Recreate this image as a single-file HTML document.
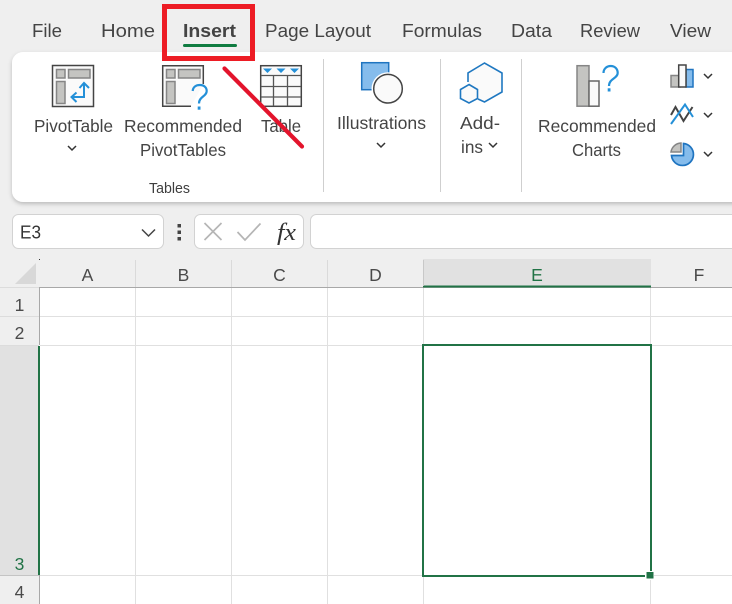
<!DOCTYPE html>
<html><head><meta charset="utf-8"><style>
html,body{margin:0;padding:0;width:732px;height:604px;overflow:hidden;background:#efefef}
svg{display:block;position:absolute;left:0;top:0}
text{font-family:"Liberation Sans",sans-serif;fill:#3f3f3f}
.t{font-size:18.5px;fill:#444}
.l{font-size:17.5px;fill:#444}
.h{font-size:17.5px;fill:#4a4a4a}
</style></head><body>
<svg width="732" height="604" viewBox="0 0 732 604" xmlns="http://www.w3.org/2000/svg">
<defs>
<filter id="s" x="-5%" y="-10%" width="110%" height="125%"><feDropShadow dx="0" dy="2" stdDeviation="2" flood-color="#000" flood-opacity=".22"/></filter>
</defs>
<rect width="732" height="604" fill="#efefef"/>
<!-- Tabs -->
<text class="t" x="32" y="37" textLength="30" lengthAdjust="spacingAndGlyphs">File</text>
<text class="t" x="101" y="37" textLength="54" lengthAdjust="spacingAndGlyphs">Home</text>
<text class="t" x="183" y="37" textLength="53" lengthAdjust="spacingAndGlyphs" style="font-weight:700">Insert</text>
<text class="t" x="265" y="37" textLength="106" lengthAdjust="spacingAndGlyphs">Page Layout</text>
<text class="t" x="402" y="37" textLength="80" lengthAdjust="spacingAndGlyphs">Formulas</text>
<text class="t" x="511" y="37" textLength="41" lengthAdjust="spacingAndGlyphs">Data</text>
<text class="t" x="580" y="37" textLength="60" lengthAdjust="spacingAndGlyphs">Review</text>
<text class="t" x="670" y="37" textLength="41" lengthAdjust="spacingAndGlyphs">View</text>
<rect x="183" y="44" width="54" height="3" rx="1.5" fill="#107c41"/>
<!-- Ribbon -->
<rect x="12" y="52" width="760" height="150" rx="11" fill="#fff" filter="url(#s)"/>
<path d="M323.5 59V192M440.5 59V192M521.5 59V192" stroke="#cfcfcf" fill="none"/>
<!-- PivotTable icon -->
<g>
<rect x="52.5" y="65.5" width="41" height="41" fill="#fafafa" stroke="#444" stroke-width="1.5"/>
<path d="M56.500 69.500h8.500v8.500h-8.500zM68.500 69.500h21.500v8.500h-21.500zM56.500 81.500h8.500v22h-8.500z" fill="#c4c4c1" stroke="#858585" stroke-width="1.500"/>
<path d="M84 83V97H72M79.500 88L84 83L89 88M76.500 92.500L71.500 97L76.500 102" fill="none" stroke="#2490d8" stroke-width="2"/>
</g>
<!-- Recommended PivotTable icon -->
<g>
<path d="M191 106.300H162.700V65.700H203.300V84" fill="#fafafa" stroke="#444" stroke-width="1.500"/>
<path d="M166.500 69.500h8.500v8.500h-8.500zM178.500 69.500h21.500v8.500h-21.500zM166.500 81.500h8.500v22h-8.500z" fill="#c4c4c1" stroke="#858585" stroke-width="1.500"/>
<path d="M192.700 91C193 87 196 85 200 85C204 85 206.700 87.500 206.700 91C206.700 96.500 199 96.500 199 103.500" fill="none" stroke="#2490d8" stroke-width="2.200"/>
<rect x="197.700" y="106.500" width="2.800" height="3.200" fill="#2490d8"/>
</g>
<!-- Table icon -->
<g>
<rect x="260.700" y="65.700" width="40.600" height="40.600" fill="#fafafa" stroke="#444" stroke-width="1.500"/>
<path d="M261 75.500H301M261 86.500H301M261 97H301M273.500 75.500V106M287.500 75.500V106" stroke="#555" stroke-width="1.300" fill="none"/>
<path d="M263 68.500h9l-4.500 4.500zM276.500 68.500h9l-4.500 4.500zM290 68.500h9l-4.500 4.500z" fill="#2490d8"/>
</g>
<!-- Illustrations icon -->
<rect x="361.700" y="62.700" width="27" height="27" fill="#85bcec" stroke="#1f74c0" stroke-width="1.500"/>
<circle cx="388" cy="88.700" r="16.500" fill="#fff"/>
<circle cx="388" cy="88.700" r="14.300" fill="#fafafa" stroke="#444" stroke-width="1.500"/>
<!-- Add-ins icon -->
<path d="M468 82V73L484.500 63L502 73V92L484.500 102L478 99" fill="#fafafa" stroke="#1f78c1" stroke-width="1.600" stroke-linejoin="miter"/>
<path d="M469 84.500L477.500 89.500V98.500L469 103L460.500 98.500V89.500Z" fill="#fafafa" stroke="#1f78c1" stroke-width="1.600"/>
<!-- Recommended Charts icon -->
<rect x="577" y="65.700" width="12" height="40.500" fill="#c4c4c1" stroke="#858585" stroke-width="1.500"/>
<rect x="589" y="81" width="10" height="25.200" fill="#fafafa" stroke="#666" stroke-width="1.500"/>
<path d="M603.500 73C603.500 69 606.500 66 610.700 66C615 66 617.700 69 617.700 73C617.700 78.500 609 78.500 609 86" fill="none" stroke="#2490d8" stroke-width="2.200"/>
<rect x="607.700" y="88.300" width="2.800" height="3.200" fill="#2490d8"/>
<!-- Small chart icons -->
<rect x="671" y="75.500" width="9" height="11.500" fill="#c4c4c1" stroke="#858585" stroke-width="1.500"/>
<rect x="686" y="69.500" width="7" height="17.500" fill="#85bcec" stroke="#1f74c0" stroke-width="1.500"/>
<rect x="678.700" y="65" width="7.300" height="22" fill="#fafafa" stroke="#444" stroke-width="1.500"/>
<path d="M671 115L675.500 107L683.500 121L692.500 107" fill="none" stroke="#444" stroke-width="2"/>
<path d="M671 124L685 104.500L693 117" fill="none" stroke="#2490d8" stroke-width="2"/>
<path d="M683.500 153.500V143.500A11 11 0 1 1 671.500 155.500H683.500Z" fill="#85bcec" stroke="#1f74c0" stroke-width="1.700"/>
<path d="M681 152V143A10.500 10.500 0 0 0 671 152Z" fill="#c4c4c1" stroke="#858585" stroke-width="1.500"/>
<!-- Chevrons -->
<g fill="none" stroke="#333" stroke-width="1.500">
<path d="M68 146l4 4 4-4M377 143l4 4 4-4M489 143l4 4 4-4M704 74l4 4 4-4M704 113l4 4 4-4M704 152l4 4 4-4"/>
</g>
<!-- Labels -->
<text class="l" x="34" y="132" textLength="79" lengthAdjust="spacingAndGlyphs">PivotTable</text>
<text class="l" x="124" y="132" textLength="118" lengthAdjust="spacingAndGlyphs">Recommended</text>
<text class="l" x="140" y="156" textLength="86" lengthAdjust="spacingAndGlyphs">PivotTables</text>
<text class="l" x="261" y="132" textLength="40" lengthAdjust="spacingAndGlyphs">Table</text>
<text x="149" y="193" font-size="14.500" textLength="41" lengthAdjust="spacingAndGlyphs">Tables</text>
<text class="l" x="337" y="129" textLength="89" lengthAdjust="spacingAndGlyphs">Illustrations</text>
<text class="l" x="460" y="129" textLength="40" lengthAdjust="spacingAndGlyphs">Add-</text>
<text class="l" x="461" y="153" textLength="22" lengthAdjust="spacingAndGlyphs">ins</text>
<text class="l" x="538" y="132" textLength="118" lengthAdjust="spacingAndGlyphs">Recommended</text>
<text class="l" x="572" y="156" textLength="49" lengthAdjust="spacingAndGlyphs">Charts</text>
<!-- Formula bar -->
<rect x="12.500" y="214.500" width="151" height="34" rx="6" fill="#fff" stroke="#d2d2d2"/>
<text x="20" y="238.500" font-size="18" textLength="21" lengthAdjust="spacingAndGlyphs" style="fill:#333">E3</text>
<path d="M142 229.500l6.500 6.500 6.500-6.500" fill="none" stroke="#444" stroke-width="1.500"/>
<path d="M177.500 224h3.500v3.500h-3.500zM177.500 230.500h3.500v3.500h-3.500zM177.500 237h3.500v3.500h-3.500z" fill="#444"/>
<rect x="194.500" y="214.500" width="109" height="34" rx="6" fill="#fff" stroke="#d2d2d2"/>
<path d="M204.500 223L221.500 240M221.500 223L204.500 240" stroke="#b5b5b5" stroke-width="1.700" fill="none"/>
<path d="M237.500 232L245 240L260.500 223.500" stroke="#b5b5b5" stroke-width="1.700" fill="none"/>
<text x="277" y="240" font-size="24" textLength="19" lengthAdjust="spacingAndGlyphs" style="font-family:'Liberation Serif',serif;font-style:italic;fill:#333">fx</text>
<rect x="310.500" y="214.500" width="460" height="34" rx="6" fill="#fff" stroke="#d2d2d2"/>
<!-- Grid -->
<rect x="39" y="288" width="693" height="316" fill="#fff"/>
<rect x="0" y="346" width="39" height="229" fill="#e1e1e1"/>
<rect x="423" y="259" width="228" height="28" fill="#e1e1e1"/>
<path d="M36 263V284H15Z" fill="#d8d8d8"/>
<rect x="39" y="259" width="1" height="1" fill="#333"/>
<path d="M135.500 260V287M231.500 260V287M327.500 260V287" stroke="#dadada" fill="none"/>
<path d="M0 316.500H39M0 345.500H39M0 287.500H39" stroke="#dcdcdc" fill="none"/>
<path d="M0 575.500H39" stroke="#c4c4c4" fill="none"/>
<path d="M39 287.500H732" stroke="#a8a8a8" fill="none"/>
<path d="M39.500 288V345M39.500 575V604" stroke="#a8a8a8" fill="none"/>
<path d="M135.500 288V604M231.500 288V604M327.500 288V604M423.500 288V604M650.500 288V604" stroke="#e0e0e0" fill="none"/>
<path d="M40 316.500H732M40 345.500H732M40 575.500H732" stroke="#e0e0e0" fill="none"/>
<rect x="38" y="346" width="2" height="229" fill="#217346"/>
<path d="M423 286.500H651" stroke="#217346" stroke-width="2" fill="none"/>
<path d="M423.500 260V286" stroke="#c8c8c8" fill="none"/>
<rect x="423" y="345" width="228" height="231" fill="none" stroke="#217346" stroke-width="2"/>
<rect x="645" y="571" width="9" height="9" fill="#fff"/>
<rect x="646.500" y="572" width="7" height="6.500" fill="#217346"/>
<!-- Headers text -->
<g text-anchor="middle">
<text class="h" x="87.500" y="281">A</text>
<text class="h" x="183.500" y="281">B</text>
<text class="h" x="279.500" y="281">C</text>
<text class="h" x="375.500" y="281">D</text>
<text class="h" x="537" y="281" style="fill:#217346">E</text>
<text class="h" x="699" y="281">F</text>
<text class="h" x="19.500" y="311">1</text>
<text class="h" x="19.500" y="339">2</text>
<text class="h" x="19.500" y="570" style="fill:#217346">3</text>
<text class="h" x="19.500" y="598">4</text>
</g>
<!-- Red annotations -->
<rect x="164.500" y="6.500" width="88" height="52" fill="none" stroke="#ed1c24" stroke-width="5"/>
<path d="M224.500 68.500L302 146.500" stroke="#e3142c" stroke-width="4.200" stroke-linecap="round" fill="none"/>
</svg>
</body></html>
